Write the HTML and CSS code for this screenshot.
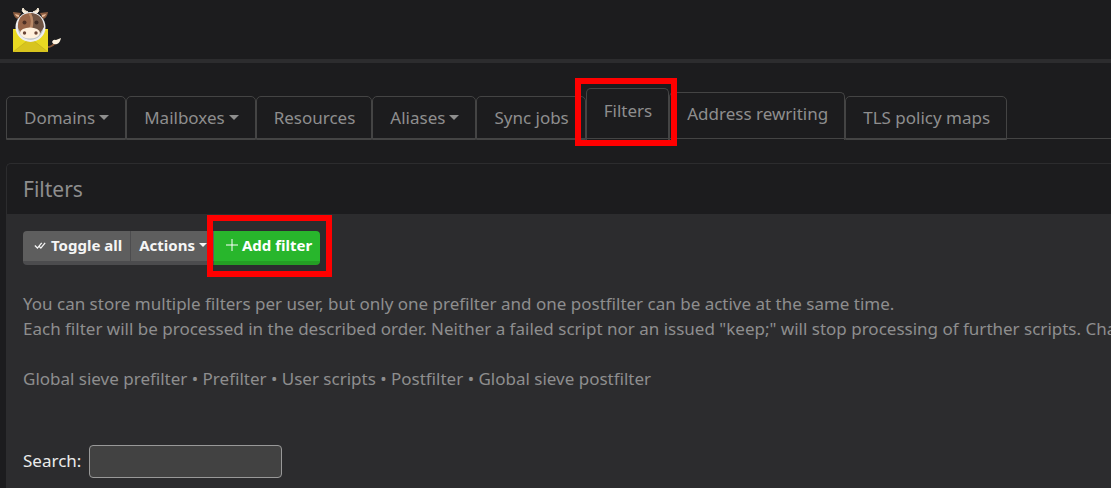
FILE: index.html
```html
<!DOCTYPE html>
<html lang="en">
<head>
<meta charset="utf-8">
<meta name="viewport" content="width=device-width, initial-scale=1">
<title>Filters</title>
<link rel="stylesheet" href="styles.css">
</head>
<body>
<header class="topbar">
  <a class="brand" href="#" aria-label="Home">
    <svg class="logo" viewBox="0 0 48 45" aria-hidden="true">
      <path d="M34 39q5 0 8-4" fill="none" stroke="#87583b" stroke-width="2"/>
      <path d="M39 34q1-3 4-2l5-2q-1 5-4 6-4 1-5-2z" fill="#fff3df"/>
      <path d="M0 21h35v23H0z" fill="#f5e329"/>
      <path d="M0 21l15 12L0 44zM35 21L20 33l15 11z" fill="#e9d922"/>
      <path d="M0 44l14-11q4-3 7 0l14 11z" fill="#d8c41e"/>
      <path d="M0 44l14-11q4-3 7 0l14 11" fill="none" stroke="#b7a51c" stroke-width=".5"/>
      <path d="M11 5Q8 3 10 0q1 3 5 4zM24 5q3-2 1-5-1 3-5 4z" fill="#fff3df" stroke="#fff3df"/>
      <path d="M8 5L0 4q1 6 5 7zM27 5l8-1q-1 6-5 7z" fill="#8c5d41"/>
      <path d="M6 7L2 6q1 3 4 3zM29 7l4-1q-1 3-4 3z" fill="#e5b999"/>
      <circle cx="17.500" cy="19" r="15" fill="#eeeef0"/>
      <circle cx="17.500" cy="19" r="12.800" fill="#b9c1c5"/>
      <path d="M5 20Q4 6 17 5q13 1 13 15l-4 7H9z" fill="#976447"/>
      <path d="M18 5q12 1 13 14l-4 6q-3-4-8-3 3-9-1-17z" fill="#6f5443"/>
      <path d="M15 5q5 7 1 16h3q3-8-1-16z" fill="#b98a68"/>
      <ellipse cx="17" cy="25" rx="10" ry="5.500" fill="#fff0dd"/>
      <circle cx="11.500" cy="14.500" r="2" fill="#4e3025"/>
      <circle cx="23.500" cy="14.500" r="2" fill="#3c2921"/>
      <circle cx="11.500" cy="25" r="1.700" fill="#6b4537"/>
      <circle cx="23" cy="25" r="1.700" fill="#6b4537"/>
    </svg>
  </a>
</header>
<main class="page">
  <nav class="tabs" aria-label="Mail configuration">
    <button class="tab caret">Domains</button>
    <button class="tab caret">Mailboxes</button>
    <button class="tab">Resources</button>
    <button class="tab caret">Aliases</button>
    <button class="tab">Sync jobs</button>
    <button class="tab tab-active marked" aria-current="page">Filters</button>
    <button class="tab tab-raised">Address rewriting</button>
    <button class="tab">TLS policy maps</button>
  </nav>
  <section class="panel">
    <h1 class="panel-title">Filters</h1>
    <div class="panel-body">
      <div class="actions">
        <button class="btn btn-first"><svg class="icon-check" viewBox="0 0 14 10" aria-hidden="true"><path d="M1 5l3 3 5-6M6 6l2 2 5-6"/></svg>Toggle all</button>
        <button class="btn btn-menu caret">Actions</button>
        <button class="btn btn-add marked"><svg class="icon-plus" viewBox="0 0 12 12" aria-hidden="true"><path d="M6 0v12M0 6h12"/></svg>Add filter</button>
      </div>
      <p class="text">You can store multiple filters per user, but only one prefilter and one postfilter can be active at the same time.<br>Each filter will be processed in the described order. Neither a failed script nor an issued "keep;" will stop processing of further scripts. Cha</p>
      <p class="text">Global sieve prefilter • Prefilter • User scripts • Postfilter • Global sieve postfilter</p>
      <div class="search">
        <label class="search-label" for="search">Search:</label>
        <input class="search-input" id="search" type="search">
      </div>
    </div>
  </section>
</main>
</body>
</html>
```
FILE: styles.css
```css
* { box-sizing: border-box; }
body {
  margin: 0;
  min-height: 100vh;
  display: flex;
  flex-direction: column;
  overflow: hidden;
  background: #1c1c1e;
  color: #8e8e8e;
  font: 17px/25px "Noto Sans", sans-serif;
}
button, input { font: inherit; }
.topbar {
  padding: 8px 13px 6px;
  border-bottom: 4px solid #2c2c2e;
}
.brand { display: block; width: 48px; }
.logo { display: block; width: 48px; height: 45px; }
.page {
  flex: 1;
  display: flex;
  flex-direction: column;
  padding: 25px 0 0 6px;
}
.tabs {
  display: flex;
  align-items: flex-end;
  border-bottom: 1px solid #444444;
  margin-bottom: 24px;
}
.tab {
  flex: none;
  margin: 0 0 -2px;
  padding: 9px 16px 9px 17px;
  border: 1px solid #444444;
  border-radius: 5px 5px 0 0;
  background: transparent;
  color: #8e8e8e;
  line-height: 24px;
}
.tab-active { padding-top: 10px; padding-bottom: 17px; border-bottom: 0; }
.tab-raised { padding-bottom: 14px; border-bottom: 0; }
.caret::after {
  content: "";
  display: inline-block;
  margin-left: 4px;
  vertical-align: 4px;
  border: 5px solid transparent;
  border-top-color: currentColor;
  border-bottom: 0;
}
.marked { position: relative; }
.marked::before {
  content: "";
  position: absolute;
  z-index: 2;
  inset: -11px -9px -6px -12px;
  border: 6px solid #ff0000;
  pointer-events: none;
}
.panel {
  flex: 1;
  display: flex;
  flex-direction: column;
  border: 1px solid #2c2c2e;
  border-width: 1px 0 0 1px;
  border-radius: 5px 0 0 0;
}
.panel-title {
  margin: 0;
  padding: 10px 16px;
  font-size: 21px;
  font-weight: 400;
  line-height: 30px;
}
.panel-body {
  flex: 1;
  padding: 17px 0 10px 16px;
  background: #2c2c2e;
}
.actions { display: flex; margin-bottom: 26px; }
.btn {
  display: flex;
  align-items: center;
  height: 34px;
  padding: 0 8px 2px;
  border: 1px solid #4c4c4e;
  border-width: 0 1px 4px 0;
  background: #5e5e5e;
  color: #f5f5f5;
  font-size: 15px;
  font-weight: 700;
}
.btn-first { padding-left: 11px; border-radius: 4px 0 0 4px; }
.btn-menu { border-right: 0; padding-right: 7px; }
.btn-menu::after { border-width: 4px 4px 0; }
.btn-add {
  padding: 0 8px 2px 12px;
  border-color: #249f24;
  border-right: 0;
  border-radius: 0 4px 4px 0;
  background: #28b62c;
  color: #ffffff;
}
.btn-add::before { inset: -16px -12px -16px -7px; }
.icon-check, .icon-plus { fill: none; stroke: currentColor; }
.icon-check { width: 12px; height: 9px; margin-right: 5px; stroke-width: 1.5; }
.icon-plus { width: 12px; height: 12px; margin-right: 4px; }
.text { margin: 0 0 25px; white-space: nowrap; }
.search {
  display: flex;
  align-items: flex-start;
  gap: 8px;
  margin-top: 54px;
  color: #ebebeb;
}
.search-label { padding-top: 3px; }
.search-input {
  width: 193px;
  height: 33px;
  padding: 4px 8px;
  border: 1px solid #999999;
  border-radius: 4px;
  background: #424242;
  color: #ebebeb;
  appearance: none;
}
```
